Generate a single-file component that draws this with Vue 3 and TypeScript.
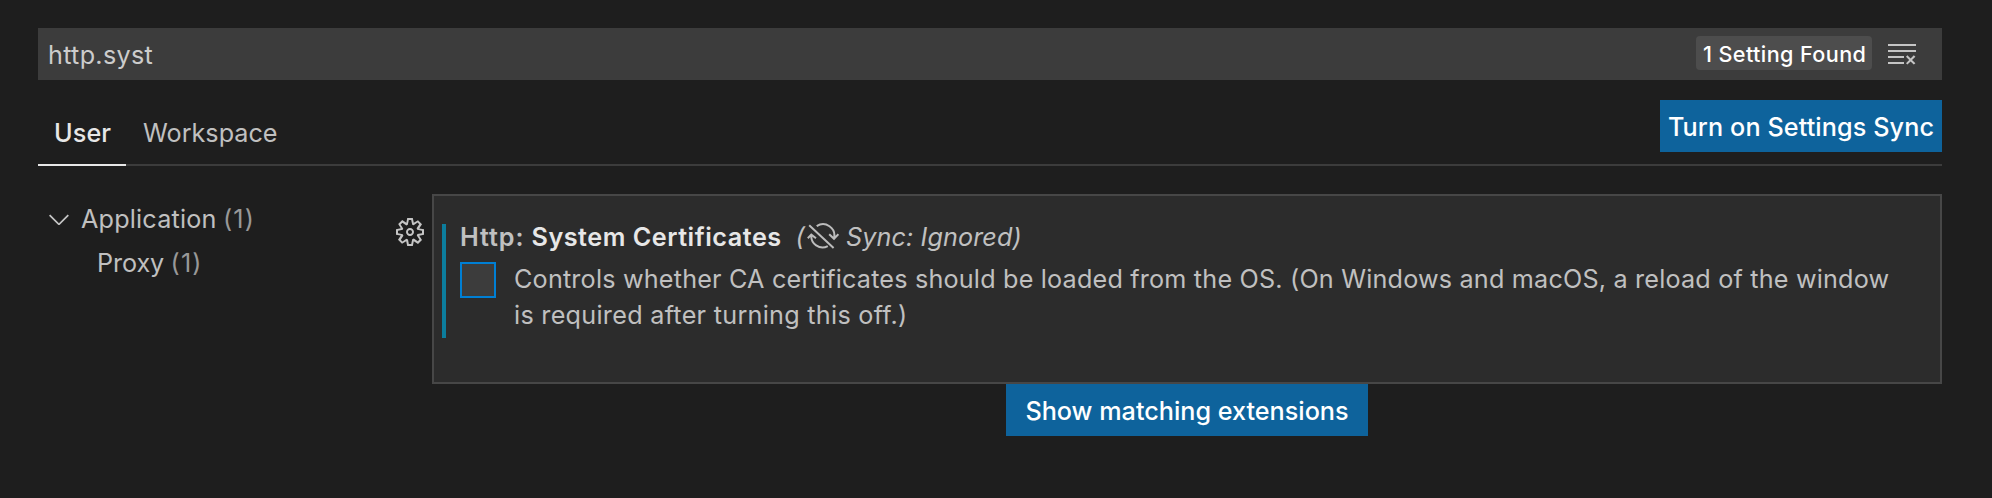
<script setup lang="ts">
import { ref } from 'vue'

interface TocEntry { label: string; count: number; level: 'group' | 'leaf' }

const query = 'http.syst'
const active = ref('User')
const enabled = ref(false)
const tabs = ['User', 'Workspace']
const toc: TocEntry[] = [
  { label: 'Application', count: 1, level: 'group' },
  { label: 'Proxy', count: 1, level: 'leaf' },
]
</script>

<template>
  <div class="settings">
    <div class="search">
      <span class="query">{{ query }}</span>
      <span class="badge">1 Setting Found</span>
      <svg class="clear" viewBox="0 0 16 16">
        <path d="M10 12.6l.7.7 1.6-1.6 1.6 1.6.8-.7L13 11l1.7-1.6-.8-.8-1.6 1.7-1.6-1.7-.7.8 1.6 1.6-1.6 1.6zM1 4h14V3H1v1zm0 3h14V6H1v1zm8 2.5V9H1v1h8v-.5zM9 13v-1H1v1h8z" />
      </svg>
    </div>

    <header class="scopes">
      <nav class="tabs">
        <span
          v-for="tab in tabs"
          :key="tab"
          :class="['tab', tab.toLowerCase(), { active: tab === active }]"
          @click="active = tab"
        >{{ tab }}</span>
      </nav>
      <button class="button sync">Turn on Settings Sync</button>
    </header>

    <main class="body">
      <aside class="toc">
        <div v-for="entry in toc" :key="entry.label" :class="['row', entry.level]">
          <svg v-if="entry.level === 'group'" class="chevron" viewBox="0 0 16 16">
            <path d="M7.976 10.072l4.357-4.357.62.618L8.284 11h-.618L3 6.333l.619-.618 4.357 4.357z" />
          </svg>
          <span class="label">{{ entry.label }}</span>
          <span class="count">({{ entry.count }})</span>
        </div>
      </aside>

      <svg class="gear" viewBox="0 0 16 16">
        <path fill-rule="evenodd" d="M9.1 4.4L8.6 2H7.4l-.5 2.4-.7.3-2-1.3-.9.8 1.3 2-.2.7-2.4.5v1.2l2.4.5.3.8-1.3 2 .8.8 2-1.3.8.3.4 2.3h1.2l.5-2.4.8-.3 2 1.3.8-.8-1.3-2 .3-.8 2.3-.4V7.4l-2.4-.5-.3-.8 1.3-2-.8-.8-2 1.3-.7-.2zM9.4 1l.5 2.4L12 2.1l2 2-1.4 2.1 2.4.4v2.8l-2.4.5L14 12l-2 2-2.1-1.4-.5 2.4H6.6l-.5-2.4L4 13.9l-2-2 1.4-2.1L1 9.4V6.6l2.4-.5L2.1 4l2-2 2.1 1.4.4-2.4h2.8zm.6 7c0 1.1-.9 2-2 2s-2-.9-2-2 .9-2 2-2 2 .9 2 2zM8 9c.6 0 1-.4 1-1s-.4-1-1-1-1 .4-1 1 .4 1 1 1z" />
      </svg>

      <section class="results">
        <article class="card">
          <div class="modified"></div>
          <div class="setting">
            <h3 class="title">
              <span class="category">Http:</span>
              <span class="name">System Certificates</span>
              <span class="paren">(</span>
              <svg class="ignored" viewBox="0 0 32 26">
                <path d="M9.7 3.2A11.3 11.3 0 0 1 27 15.2M22.2 11.2L27 15.8l4.4-4.6M4.4 11.8A11.3 11.3 0 0 0 20.8 23.2M.8 15.2l3.5-3.6 4.7 3.6M2.2 2.2L26.6 25" />
              </svg>
              <span class="ignored-text">Sync: Ignored)</span>
            </h3>
            <div class="value">
              <span class="checkbox" role="checkbox" :aria-checked="enabled" @click="enabled = !enabled"></span>
              <p class="description">
                <span class="line first">Controls whether CA certificates should be loaded from the OS. (On Windows and macOS, a reload of the window</span>
                <span class="line second">is required after turning this off.)</span>
              </p>
            </div>
          </div>
        </article>
        <button class="button extensions">Show matching extensions</button>
      </section>
    </main>
  </div>
</template>

<style>
body {
  background: #1e1e1e;
}
</style>

<style scoped>
.settings {
  box-sizing: border-box;
  height: 498px;
  padding: 28px 50px 0 38px;
  background: #1e1e1e;
  color: #c0c0c0;
  font: 400 25.2px/36px Inter, "Liberation Sans", sans-serif;
  white-space: nowrap;
  overflow: hidden;
}

svg {
  display: block;
  flex: none;
  fill: #c5c5c5;
}

.search {
  display: flex;
  align-items: center;
  box-sizing: border-box;
  height: 52px;
  padding: 0 24px 0 10px;
  background: #3c3c3c;
}

.query {
  flex: 1;
  padding-top: 2px;
  color: #cccccc;
  letter-spacing: 0.29px;
}

.badge {
  box-sizing: border-box;
  width: 176px;
  height: 34px;
  margin: 0 14px 2px 0;
  padding-left: 7px;
  border-radius: 4px;
  background: #4d4d4d;
  color: #fff;
  font-size: 21.6px;
  font-weight: 500;
  line-height: 37px;
  letter-spacing: 0.4px;
}

.clear {
  width: 32px;
  height: 32px;
}

.scopes {
  display: flex;
  justify-content: space-between;
  height: 64px;
  margin-top: 20px;
  border-bottom: 2px solid #3c3c3c;
}

.tabs {
  display: flex;
}

.tab {
  box-sizing: border-box;
  height: 66px;
  padding-top: 15px;
  border-bottom: 2px solid transparent;
}

.tab.user {
  width: 88px;
  padding-left: 16px;
  letter-spacing: 0.1px;
}

.tab.workspace {
  padding-left: 17px;
  letter-spacing: 0;
}

.tab.active {
  color: #e7e7e7;
  font-weight: 500;
  border-bottom-color: #e7e7e7;
}

.button {
  display: block;
  box-sizing: border-box;
  height: 52px;
  padding: 0;
  border: 0;
  background: #0e639c;
  color: #fff;
  font: inherit;
  font-weight: 500;
  line-height: 54px;
  text-align: center;
}

.sync {
  width: 282px;
  letter-spacing: 0.1px;
}

.body {
  display: flex;
  align-items: flex-start;
  margin-top: 28px;
}

.toc {
  width: 356px;
  padding-top: 3px;
}

.row {
  display: flex;
  align-items: center;
  height: 44px;
}

.row.group {
  padding-left: 5px;
}

.row.leaf {
  padding-left: 59px;
}

.chevron {
  width: 32px;
  height: 32px;
  margin-right: 6px;
}

.group .label {
  letter-spacing: 0.18px;
}

.leaf .label {
  letter-spacing: -0.1px;
}

.count {
  margin-left: 6.5px;
  color: #989898;
  letter-spacing: 1.1px;
}

.gear {
  width: 32px;
  height: 32px;
  margin: 22px 6px 0 0;
}

.results {
  flex: 1;
}

.card {
  display: flex;
  box-sizing: border-box;
  height: 190px;
  padding: 28px 0 0 8px;
  border: 2px solid #474747;
  background: #2c2c2c;
}

.modified {
  width: 4px;
  height: 114px;
  background: #0c7d9d;
}

.setting {
  padding-left: 14px;
}

.title {
  display: flex;
  align-items: flex-start;
  height: 38px;
  margin: 0;
  font-size: inherit;
  font-weight: 600;
  line-height: 26px;
}

.category {
  width: 71.5px;
  letter-spacing: 0.9px;
}

.name {
  width: 264px;
  color: #e7e7e7;
  letter-spacing: 0.52px;
}

.paren,
.ignored-text {
  font-weight: 400;
  font-style: italic;
}

.paren {
  width: 11px;
}

.ignored-text {
  letter-spacing: 0.1px;
}

.ignored {
  width: 32px;
  height: 26px;
  margin: -1px 7.5px 0 0;
  fill: none;
  stroke: #bcbcbc;
  stroke-width: 2;
}

.value {
  display: flex;
  align-items: flex-start;
}

.checkbox {
  box-sizing: border-box;
  width: 36px;
  height: 36px;
  border: 2px solid #007fd4;
  background: #3c3c3c;
}

.description {
  margin: -1px 0 0 18px;
}

.line {
  display: block;
}

.first {
  letter-spacing: 0.187px;
}

.second {
  letter-spacing: 0.276px;
}

.extensions {
  width: 362px;
  margin-left: 574px;
  letter-spacing: 0;
}
</style>
